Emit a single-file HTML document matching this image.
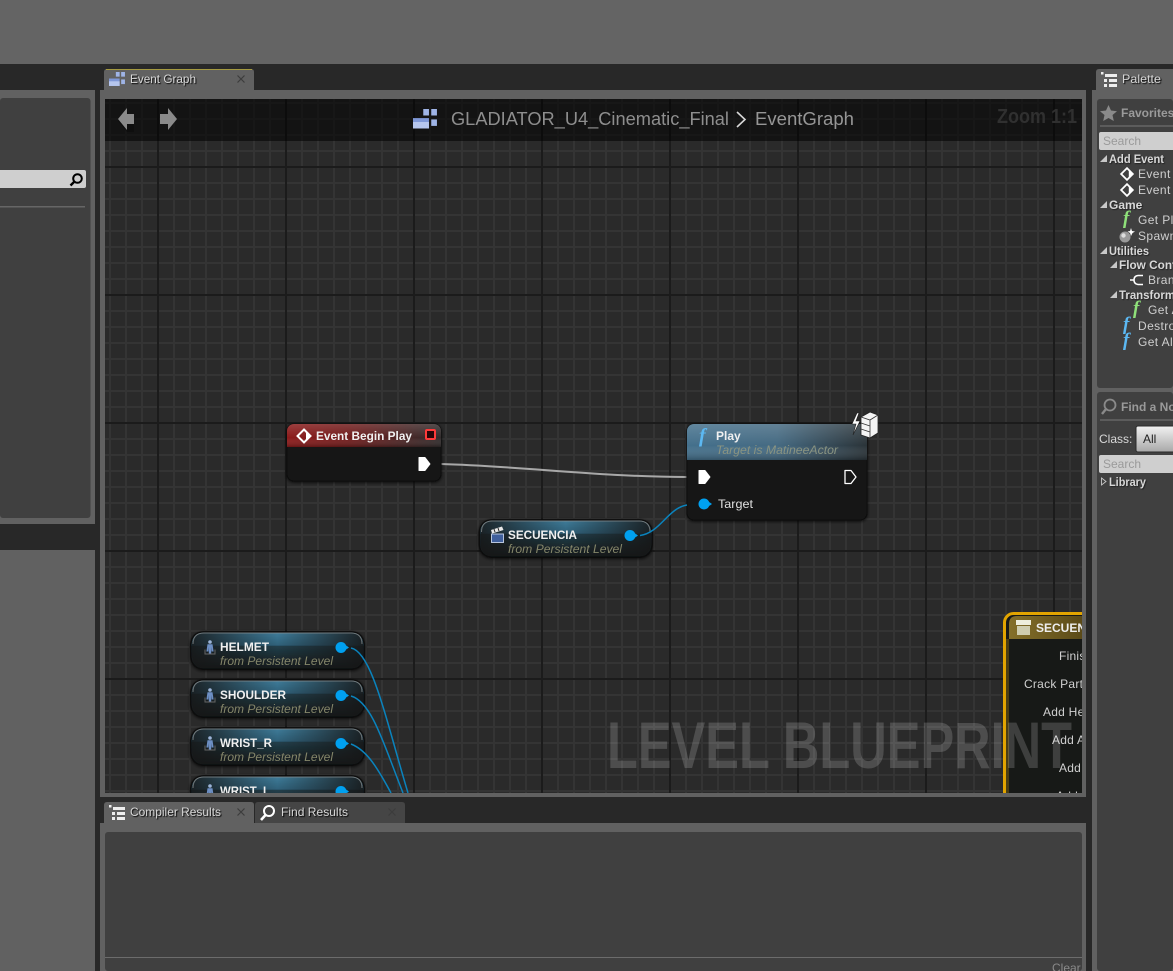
<!DOCTYPE html>
<html><head><meta charset="utf-8">
<style>
html,body{margin:0;padding:0;background:#616161;width:1173px;height:971px;overflow:hidden}
svg{display:block;position:absolute;left:0;top:0}
text{font-family:"Liberation Sans",sans-serif;font-size:12px;fill:#dcdcdc}
.tab{fill:#d8d8d8;text-shadow:1px 1px 1px #000}
.b{font-weight:bold;fill:#f0f0f0}
.it{font-style:italic;fill:#85866a}
.tree{font-weight:bold;fill:#d8d8d8;text-shadow:1px 1px 1px #222}
.item{fill:#cfcfcf;letter-spacing:.4px}
.hd{font-weight:bold;fill:#9a9a9a}
.se{fill:#9a9a9a}
.lbl{fill:#d0d0d0;letter-spacing:.25px}
.fi{font-family:"Liberation Serif",serif;font-style:italic;font-size:19px;font-weight:bold}
</style></head><body>
<svg width="1173" height="971" viewBox="0 0 1173 971" xmlns="http://www.w3.org/2000/svg">
<defs>
<pattern id="minor" x="109" y="102" width="16" height="16" patternUnits="userSpaceOnUse">
<rect width="16" height="16" fill="#2a2a2a"/>
<rect x="0" width="2" height="16" fill="#343434"/><rect y="0" width="16" height="2" fill="#343434"/>
</pattern>
<pattern id="major" x="157" y="166" width="128" height="128" patternUnits="userSpaceOnUse">
<rect x="0" width="2" height="128" fill="#1b1b1b"/><rect y="0" width="128" height="2" fill="#1b1b1b"/>
</pattern>
<clipPath id="gc"><rect x="105" y="99" width="977" height="694"/></clipPath>
<clipPath id="rc"><rect x="1097" y="99" width="76" height="872"/></clipPath>
<clipPath id="cn"><rect x="1003" y="600" width="79" height="193"/></clipPath>
<clipPath id="ev"><rect x="287" y="424" width="154" height="57" rx="7"/></clipPath>
<clipPath id="pl"><rect x="687" y="424" width="180" height="96" rx="7"/></clipPath>
<linearGradient id="redH"><stop offset="0" stop-color="#8c1a1a"/><stop offset=".4" stop-color="#701c1c"/><stop offset="1" stop-color="#312c2c"/></linearGradient>
<linearGradient id="bluH"><stop offset="0" stop-color="#44708c"/><stop offset=".5" stop-color="#456a82"/><stop offset="1" stop-color="#2a3338"/></linearGradient>
<linearGradient id="top" x1="0" y1="0" x2="0" y2="1"><stop offset="0" stop-color="#fff" stop-opacity=".16"/><stop offset=".6" stop-color="#fff" stop-opacity="0"/><stop offset="1" stop-color="#000" stop-opacity=".25"/></linearGradient>
<linearGradient id="pH" x1="0" y1="0" x2="0" y2="1"><stop offset="0" stop-color="#3f7d9b"/><stop offset=".36" stop-color="#2f617a"/><stop offset=".38" stop-color="#213f4c"/><stop offset=".7" stop-color="#1c2b30"/><stop offset="1" stop-color="#16191a"/></linearGradient>
<linearGradient id="pG"><stop offset="0" stop-color="#161616" stop-opacity=".85"/><stop offset=".5" stop-color="#161616" stop-opacity="0"/><stop offset="1" stop-color="#161616" stop-opacity=".88"/></linearGradient>
<linearGradient id="gold" x1="0" y1="0" x2="1" y2="0"><stop offset="0" stop-color="#85702a"/><stop offset="1" stop-color="#564616"/></linearGradient>
<linearGradient id="combo" x1="0" y1="0" x2="0" y2="1"><stop offset="0" stop-color="#f2f2f2"/><stop offset="1" stop-color="#a8a8a8"/></linearGradient>
<filter id="sh" x="-10%" y="-20%" width="120%" height="140%"><feDropShadow dx="0" dy="1" stdDeviation="1.5" flood-color="#000" flood-opacity=".8"/></filter>
<g id="pill">
<rect width="173" height="37" rx="12" fill="url(#pH)" stroke="#0d0d0d" stroke-width="1.5" filter="url(#sh)"/>
<rect x="1" y="1" width="171" height="35" rx="11" fill="url(#pG)"/>
<path d="M2 12 Q2 1 13 1 H160 Q171 1 171 12" fill="none" stroke="#8a8f90" stroke-width="1" stroke-opacity=".75"/>
</g>
<g id="man"><circle cx="0" cy="-5.5" r="1.8" fill="#9cb4d8"/><path d="M-2.5 -3.2 H2.5 L3.6 4 H1.6 L1.2 -0.5 V6 H-1.2 V-0.5 L-1.6 4 H-3.6Z" fill="#6d8fc4"/><path d="M-5 2 V6.5 H5 V2" fill="none" stroke="#666" stroke-width="1"/></g>
<g id="pin"><circle cx="0" cy="0" r="5.5" fill="#00a0f0"/><path d="M5.2 -2 L8 0 L5.2 2Z" fill="#00a0f0"/></g>
<g id="list"><rect x="0" y="0" width="2.5" height="2.5" fill="#eee"/><rect x="4" y="2" width="12" height="3" fill="#eee"/><rect x="3" y="7" width="3" height="3" fill="#eee"/><rect x="8" y="7" width="8" height="3" fill="#eee"/><rect x="3" y="12" width="3" height="3" fill="#eee"/><rect x="8" y="12" width="8" height="3" fill="#eee"/></g>
<g id="gr"><rect x="9" y="0" width="5" height="5" fill="#9fb4e6"/><rect x="16" y="0" width="5" height="5" fill="#9fb4e6"/><rect x="16" y="8" width="5" height="5" fill="#9fb4e6"/><rect x="0" y="7" width="14" height="8" fill="#7f98d8"/><rect x="0" y="10" width="14" height="5" fill="#b6c6ee"/></g>
<g id="dia"><path d="M0 -6.5 L6.5 0 L0 6.5 L-6.5 0Z" fill="none" stroke="#fff" stroke-width="2"/><path d="M2 -4 L6 0 L2 4Z" fill="#fff"/></g>
<g id="x"><path d="M-3.5 -3.5 L3.5 3.5 M3.5 -3.5 L-3.5 3.5" stroke="#3c3c3c" stroke-width="1.2"/></g>
</defs>

<!-- backgrounds -->
<rect width="1173" height="971" fill="#616161"/>
<rect x="0" y="0" width="1173" height="64" fill="#646464"/>
<rect x="0" y="64" width="1173" height="26" fill="#282828"/>
<rect x="1086" y="64" width="87" height="907" fill="#282828"/>
<rect x="95" y="64" width="5" height="907" fill="#282828"/>
<!-- left panel -->
<rect x="0" y="90" width="95" height="434" fill="#616161"/>
<rect x="0" y="98" width="90.5" height="420" rx="3" fill="#404040"/>
<rect x="0" y="524" width="100" height="26" fill="#282828"/>
<rect x="0" y="550" width="95" height="421" fill="#616161"/>
<path d="M0 170 H84 Q86 170 86 172 V186 Q86 188 84 188 H0Z" fill="#cfcfcf"/>
<circle cx="77.5" cy="178.5" r="4.3" fill="none" stroke="#000" stroke-width="2"/><path d="M74 182 L70.5 185.5" stroke="#000" stroke-width="2.4"/>
<rect x="0" y="206" width="85" height="1.5" fill="#666"/>

<!-- centre panel -->
<rect x="100" y="90" width="986" height="707" fill="#616161"/>
<rect x="100" y="797" width="986" height="26" fill="#282828"/>
<rect x="100" y="823" width="986" height="148" fill="#616161"/>
<rect x="105" y="832" width="977" height="139" rx="3" fill="#404040"/>
<rect x="105" y="957" width="977" height="1" fill="#6c6c6c"/>
<text x="1052" y="972" style="fill:#8a8a8a">Clear</text>

<!-- tabs -->
<path d="M104 90 V72 Q104 69 107 69 H251 Q254 69 254 72 V90Z" fill="#616161"/>
<rect x="106" y="69" width="146" height="1" fill="#a59a40"/>
<use href="#gr" transform="translate(109,72) scale(.76,.93)"/>
<text class="tab" x="130" y="83" textLength="66" lengthAdjust="spacingAndGlyphs">Event Graph</text>
<use href="#x" x="241" y="79"/>
<path d="M104 823 V805 Q104 802 107 802 H251 Q254 802 254 805 V823Z" fill="#616161"/>
<path d="M255 823 V805 Q255 802 258 802 H402 Q405 802 405 805 V823Z" fill="#454545"/>
<use href="#list" x="109" y="805"/>
<text class="tab" x="130" y="816" textLength="91" lengthAdjust="spacingAndGlyphs">Compiler Results</text>
<use href="#x" x="241" y="812"/>
<circle cx="269" cy="811" r="5" fill="none" stroke="#fff" stroke-width="2"/><path d="M265.5 815 L261 820" stroke="#fff" stroke-width="2.6"/>
<text class="tab" x="281" y="816" textLength="67" lengthAdjust="spacingAndGlyphs">Find Results</text>
<use href="#x" x="392" y="812"/>
<path d="M1096 90 V72 Q1096 69 1099 69 H1173 V90Z" fill="#616161"/>
<use href="#list" x="1101" y="72"/>
<text class="tab" x="1122" y="83" textLength="39" lengthAdjust="spacingAndGlyphs">Palette</text>

<!-- graph -->
<g clip-path="url(#gc)">
<rect x="105" y="99" width="977" height="694" fill="url(#minor)"/>
<rect x="105" y="99" width="977" height="694" fill="url(#major)"/>
<rect x="105" y="99" width="977" height="42" fill="#000" fill-opacity=".55"/>

<!-- header bar -->
<path d="M127 110 L118 121 L127 132 H134 V126 Z" fill="#000" fill-opacity=".25"/>
<path d="M127 108 L118 119 L127 130 V124 H134 V114 H127Z" fill="#8a8a8a"/>
<path d="M168 108 L177 119 L168 130 V124 H160 V114 H168Z" fill="#8a8a8a"/>
<use href="#gr" transform="translate(413,109) scale(1.14,1.3)"/>
<text x="451" y="125" textLength="278" lengthAdjust="spacingAndGlyphs" style="font-size:18px;fill:#8e8e8e">GLADIATOR_U4_Cinematic_Final</text>
<path d="M737 112 L745 119.5 L737 127" fill="none" stroke="#d8d8d8" stroke-width="1.6"/>
<text x="755" y="125" textLength="99" lengthAdjust="spacingAndGlyphs" style="font-size:18px;fill:#969696">EventGraph</text>
<text x="997" y="123" textLength="80" lengthAdjust="spacingAndGlyphs" style="font-size:20px;font-weight:bold;fill:#303030">Zoom 1:1</text>

<!-- exec wire -->
<path d="M441 464 C520 466 600 477 687 477" fill="none" stroke="#a8a8a8" stroke-width="2"/>

<!-- Event Begin Play -->
<rect x="287" y="424" width="154" height="57" rx="7" fill="#171917" stroke="#0a0a0a" filter="url(#sh)"/>
<g clip-path="url(#ev)">
<rect x="287" y="424" width="154" height="23" fill="url(#redH)"/>
<rect x="287" y="424" width="154" height="23" fill="url(#top)"/>
</g>
<use href="#dia" x="304" y="436"/>
<text class="b" x="316" y="440" textLength="96" lengthAdjust="spacingAndGlyphs">Event Begin Play</text>
<rect x="426" y="430" width="9" height="9" rx="1" fill="#2a0508" stroke="#ff3a3a" stroke-width="2"/>
<path d="M419 457.5 H425 L430 464 L425 470.5 H419Z" fill="#fff" stroke="#fff" stroke-linejoin="round"/>

<!-- Play -->
<rect x="687" y="424" width="180" height="96" rx="7" fill="#171917" stroke="#0a0a0a" filter="url(#sh)"/>
<g clip-path="url(#pl)">
<rect x="687" y="424" width="180" height="36" fill="url(#bluH)"/>
<rect x="687" y="424" width="180" height="36" fill="url(#top)"/>
</g>
<text x="699" y="442" style="font-family:'Liberation Serif',serif;font-style:italic;font-size:20px;font-weight:bold;fill:#5cb8f2">f</text>
<text class="b" x="716" y="440">Play</text>
<text class="it" x="716" y="454" textLength="122" lengthAdjust="spacingAndGlyphs" style="fill:#8a9482">Target is MatineeActor</text>
<path d="M699 470.5 H705 L710 477 L705 483.5 H699Z" fill="#fff" stroke="#fff" stroke-linejoin="round"/>
<path d="M845 470.5 H851 L856 477 L851 483.5 H845Z" fill="none" stroke="#fff" stroke-width="1.3" stroke-linejoin="round"/>
<use href="#pin" x="704" y="504"/>
<text x="718" y="508" textLength="35" lengthAdjust="spacingAndGlyphs" style="fill:#e0e0e0">Target</text>
<!-- lightning + cube -->
<path d="M857 413 L852 424 L856 424 L853 435 L860 421 L856 421 L859 413Z" fill="#fff" stroke="#222" stroke-width=".6"/>
<path d="M861 417 L870 412 L878 415 V433 L870 438 L861 435Z" fill="#f4f4f4" stroke="#222" stroke-width=".8"/>
<path d="M861 417 L870 420 L878 415 M870 420 V438 M861 423 L870 426 M861 429 L870 432" fill="none" stroke="#333" stroke-width=".8"/>

<!-- SECUENCIA -->
<use href="#pill" transform="translate(479.5,520) scale(.997,1)"/>
<path d="M491 530 L502 526.5 L503.5 530 L492 533.5Z" fill="#e8e8e8"/>
<path d="M494 529 L495 532 M498 528 L499 531" stroke="#222" stroke-width="1"/>
<rect x="491.5" y="534" width="12" height="8.5" fill="#3f5f9c" stroke="#c8d4ec" stroke-width=".9"/>
<text class="b" x="508" y="539" textLength="69" lengthAdjust="spacingAndGlyphs">SECUENCIA</text>
<text class="it" x="508" y="553" textLength="114" lengthAdjust="spacingAndGlyphs">from Persistent Level</text>
<use href="#pin" x="630" y="535.5"/>
<path d="M640 535.5 C660 533 668 508 687 505" fill="none" stroke="#0a83bd" stroke-width="1.5"/>

<!-- pills -->
<use href="#pill" x="191" y="632"/>
<use href="#man" x="210" y="647.5"/>
<text class="b" x="220" y="651" textLength="49" lengthAdjust="spacingAndGlyphs">HELMET</text>
<text class="it" x="220" y="665" textLength="113" lengthAdjust="spacingAndGlyphs">from Persistent Level</text>
<use href="#pin" x="341" y="647.5"/>

<use href="#pill" x="191" y="680"/>
<use href="#man" x="210" y="695.5"/>
<text class="b" x="220" y="699" textLength="66" lengthAdjust="spacingAndGlyphs">SHOULDER</text>
<text class="it" x="220" y="713" textLength="113" lengthAdjust="spacingAndGlyphs">from Persistent Level</text>
<use href="#pin" x="341" y="695.5"/>

<use href="#pill" x="191" y="728"/>
<use href="#man" x="210" y="743.5"/>
<text class="b" x="220" y="747" textLength="52" lengthAdjust="spacingAndGlyphs">WRIST_R</text>
<text class="it" x="220" y="761" textLength="113" lengthAdjust="spacingAndGlyphs">from Persistent Level</text>
<use href="#pin" x="341" y="743.5"/>

<use href="#pill" x="191" y="776"/>
<use href="#man" x="210" y="791.5"/>
<text class="b" x="220" y="795" textLength="50" lengthAdjust="spacingAndGlyphs">WRIST_L</text>
<use href="#pin" x="341" y="791.5"/>

<!-- wires over pills -->
<g fill="none" stroke="#0a83bd" stroke-width="1.5">
<path d="M351 648 C372 652 386 720 408 793"/>
<path d="M351 696 C372 702 384 745 403 793"/>
<path d="M351 744 C366 750 376 765 391 793"/>
</g>

<!-- Matinee node -->
<g clip-path="url(#cn)">
<rect x="1004.5" y="613.5" width="120" height="230" rx="9" fill="#171917" stroke="#e2a400" stroke-width="3"/>
<rect x="1006" y="639" width="3" height="160" fill="#4a3e14"/>
<path d="M1009 639 V624 Q1009 616 1017 616 H1090 V639Z" fill="url(#gold)"/>
<rect x="1016" y="620" width="15" height="5" fill="#eeeedd"/>
<rect x="1017" y="626" width="13" height="9" fill="#cfcdb0"/>
<text class="b" x="1036" y="632" style="fill:#eee">SECUENCIA</text>
<text class="lbl" x="1059" y="660">Finished</text>
<text class="lbl" x="1024" y="688">Crack Parts</text>
<text class="lbl" x="1043" y="716">Add Helmet</text>
<text class="lbl" x="1052" y="744">Add Arm</text>
<text class="lbl" x="1059" y="772">Add</text>
<text class="lbl" x="1056" y="800">Add</text>
</g>
<!-- watermark -->
<text x="607" y="768" textLength="465" lengthAdjust="spacingAndGlyphs" style="font-size:66px;font-weight:bold;fill:#fff;fill-opacity:.17">LEVEL BLUEPRINT</text>
</g>

<!-- right panel -->
<rect x="1092" y="90" width="81" height="881" fill="#616161"/>
<rect x="1097" y="99" width="76" height="289" rx="3" fill="#404040"/>
<rect x="1097" y="392" width="76" height="579" rx="3" fill="#404040"/>
<g clip-path="url(#rc)">
<path d="M1108.5 105 L1111 110.5 L1117 111.2 L1112.5 115 L1113.8 121 L1108.5 118 L1103.2 121 L1104.5 115 L1100 111.2 L1106 110.5Z" fill="#8a8a8a"/>
<text class="hd" x="1121" y="117">Favorites</text>
<rect x="1100" y="125" width="73" height="2" fill="#5c5c5c"/>
<rect x="1099" y="132" width="80" height="18" rx="2" fill="#cfcfcf"/>
<text class="se" x="1103" y="145">Search</text>

<path d="M1100 162 L1107 155 V162Z" fill="#c8c8c8"/>
<text class="tree" x="1109" y="163" textLength="55" lengthAdjust="spacingAndGlyphs">Add Event</text>
<use href="#dia" transform="translate(1127,174) scale(.9)"/>
<text class="item" x="1138" y="178">Event Begin</text>
<use href="#dia" transform="translate(1127,190) scale(.9)"/>
<text class="item" x="1138" y="194">Event Tick</text>
<path d="M1100 208 L1107 201 V208Z" fill="#c8c8c8"/>
<text class="tree" x="1109" y="209">Game</text>
<text class="fi" x="1123" y="224" style="fill:#8fe07a">f</text>
<text class="item" x="1138" y="224">Get Player</text>
<circle cx="1125" cy="237" r="5.5" fill="#9a9a9a"/><circle cx="1123.5" cy="235.5" r="2.2" fill="#ddd"/><path d="M1131 228 L1132 231 L1135 231.5 L1132.5 233 L1131 236 L1130 233 L1127.5 231.5 L1130 231Z" fill="#fff"/>
<text class="item" x="1138" y="240">Spawn</text>
<path d="M1100 254 L1107 247 V254Z" fill="#c8c8c8"/>
<text class="tree" x="1109" y="255" textLength="40" lengthAdjust="spacingAndGlyphs">Utilities</text>
<path d="M1110 268 L1117 261 V268Z" fill="#c8c8c8"/>
<text class="tree" x="1119" y="269" textLength="72" lengthAdjust="spacingAndGlyphs">Flow Control</text>
<path d="M1143 275.5 H1138 Q1134 276 1134 280 Q1134 284 1138 284.5 H1143 M1130 280 H1134" fill="none" stroke="#fff" stroke-width="1.6"/>
<text class="item" x="1148" y="284">Branch</text>
<path d="M1110 298 L1117 291 V298Z" fill="#c8c8c8"/>
<text class="tree" x="1119" y="299" textLength="56" lengthAdjust="spacingAndGlyphs">Transform</text>
<text class="fi" x="1133" y="314" style="fill:#8fe07a">f</text>
<text class="item" x="1148" y="314">Get Actor</text>
<text class="fi" x="1123" y="330" style="fill:#5cb8f2">f</text>
<text class="item" x="1138" y="330">Destroy</text>
<text class="fi" x="1123" y="346" style="fill:#5cb8f2">f</text>
<text class="item" x="1138" y="346">Get All</text>

<circle cx="1110" cy="405" r="5.5" fill="none" stroke="#8a8a8a" stroke-width="1.8"/><path d="M1106 409 L1102 414" stroke="#8a8a8a" stroke-width="2.4"/>
<text class="hd" x="1121" y="411">Find a Node</text>
<rect x="1100" y="419" width="73" height="2" fill="#5c5c5c"/>
<text x="1099" y="443" style="fill:#d8d8d8">Class:</text>
<rect x="1136" y="426" width="60" height="26" rx="2" fill="url(#combo)" stroke="#2a2a2a"/>
<text x="1143" y="443" style="fill:#222">All</text>
<rect x="1099" y="455" width="80" height="18" rx="2" fill="#cfcfcf"/>
<text class="se" x="1103" y="468">Search</text>
<path d="M1101.5 478 L1106 481.5 L1101.5 485Z" fill="none" stroke="#c8c8c8" stroke-width=".9"/>
<text class="tree" x="1109" y="486" textLength="37" lengthAdjust="spacingAndGlyphs">Library</text>
</g>
</svg>
</body></html>
